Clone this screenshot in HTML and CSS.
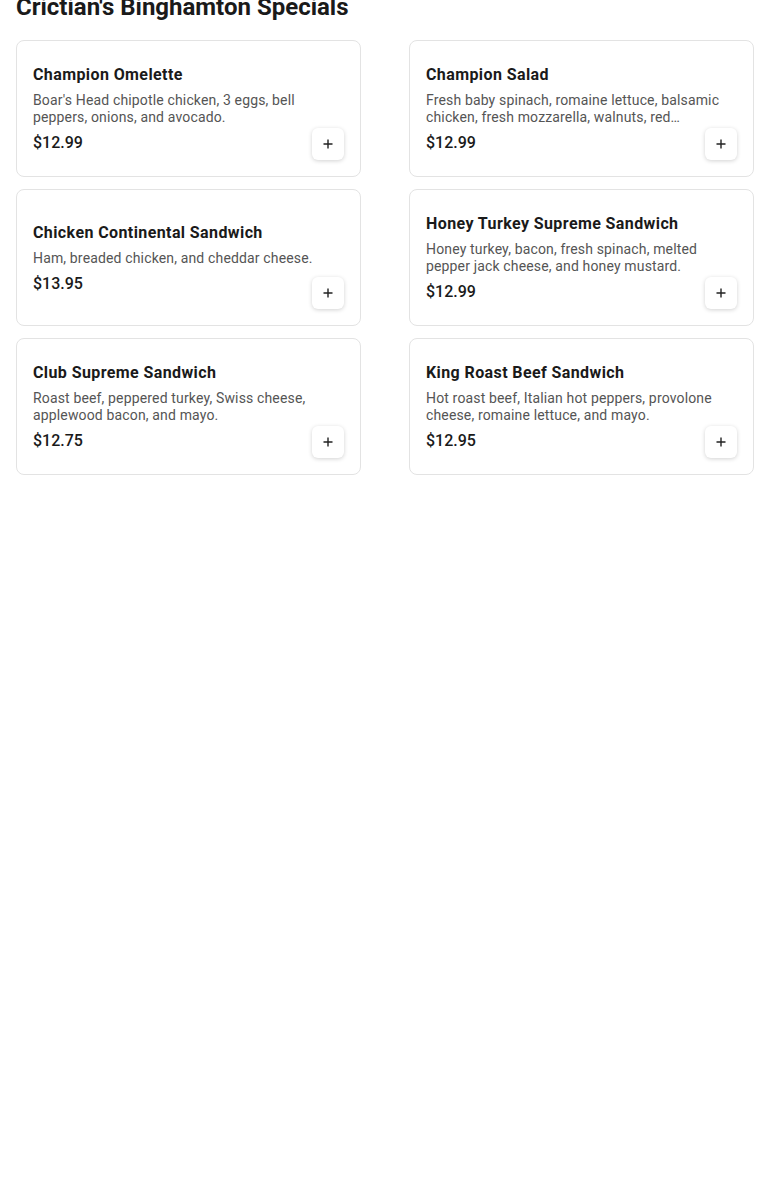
FILE: index.html
```html
<!DOCTYPE html>
<html lang="en">
<head>
  <meta charset="UTF-8">
  <meta name="viewport" content="width=device-width, initial-scale=1.0">
  <title>Crictian's Binghamton Specials</title>
  <link rel="stylesheet" href="styles.css">
</head>
<body>
  <div class="page">
    <h1 class="section-title">Crictian's Binghamton Specials</h1>

    <div class="menu-grid">
      <div class="menu-card">
        <div class="item-info">
          <div class="item-name">Champion Omelette</div>
          <div class="item-desc">Boar's Head chipotle chicken, 3 eggs, bell peppers, onions, and avocado.</div>
          <div class="item-price">$12.99</div>
        </div>
        <div class="add-button"><svg viewBox="0 0 10 10"><path d="M5 0.5v9M0.5 5h9"/></svg></div>
      </div>

      <div class="menu-card">
        <div class="item-info">
          <div class="item-name">Champion Salad</div>
          <div class="item-desc">Fresh baby spinach, romaine lettuce, balsamic chicken, fresh mozzarella, walnuts, red cranberries, and balsamic vinaigrette.</div>
          <div class="item-price">$12.99</div>
        </div>
        <div class="add-button"><svg viewBox="0 0 10 10"><path d="M5 0.5v9M0.5 5h9"/></svg></div>
      </div>

      <div class="menu-card">
        <div class="item-info">
          <div class="item-name">Chicken Continental Sandwich</div>
          <div class="item-desc">Ham, breaded chicken, and cheddar cheese.</div>
          <div class="item-price">$13.95</div>
        </div>
        <div class="add-button"><svg viewBox="0 0 10 10"><path d="M5 0.5v9M0.5 5h9"/></svg></div>
      </div>

      <div class="menu-card">
        <div class="item-info">
          <div class="item-name">Honey Turkey Supreme Sandwich</div>
          <div class="item-desc">Honey turkey, bacon, fresh spinach, melted pepper jack cheese, and honey mustard.</div>
          <div class="item-price">$12.99</div>
        </div>
        <div class="add-button"><svg viewBox="0 0 10 10"><path d="M5 0.5v9M0.5 5h9"/></svg></div>
      </div>

      <div class="menu-card">
        <div class="item-info">
          <div class="item-name">Club Supreme Sandwich</div>
          <div class="item-desc">Roast beef, peppered turkey, Swiss cheese, applewood bacon, and mayo.</div>
          <div class="item-price">$12.75</div>
        </div>
        <div class="add-button"><svg viewBox="0 0 10 10"><path d="M5 0.5v9M0.5 5h9"/></svg></div>
      </div>

      <div class="menu-card">
        <div class="item-info">
          <div class="item-name">King Roast Beef Sandwich</div>
          <div class="item-desc">Hot roast beef, Italian hot peppers, provolone cheese, romaine lettuce, and mayo.</div>
          <div class="item-price">$12.95</div>
        </div>
        <div class="add-button"><svg viewBox="0 0 10 10"><path d="M5 0.5v9M0.5 5h9"/></svg></div>
      </div>
    </div>
  </div>
</body>
</html>
```

FILE: styles.css
```css
/* Basic Reset */
* {
  margin: 0;
  padding: 0;
  box-sizing: border-box;
}

body {
  font-family: Roboto, "Liberation Sans", sans-serif;
  background: #ffffff;
  color: #1f1f1f;
}

.page {
  padding: 0 16px;
}

.section-title {
  margin-top: -7px;
  margin-bottom: 19px;
  font-size: 24px;
  line-height: 28px;
  font-weight: 700;
  color: #1a1a1a;
}

/* Two column grid of cards */
.menu-grid {
  display: grid;
  grid-template-columns: 1fr 1fr;
  column-gap: 48px;
  row-gap: 12px;
}

.menu-card {
  display: grid;
  height: 137px;
  padding: 16px;
  border: 1px solid #e3e3e3;
  border-radius: 8px;
  background: #fff;
}

/* info and button share the same cell */
.item-info,
.add-button {
  grid-area: 1 / 1;
}

.item-info {
  align-self: center;
  min-width: 0;
}

.item-name {
  font-size: 16px;
  line-height: 22px;
  font-weight: 700;
  letter-spacing: 0.4px;
  color: #1a1a1a;
  margin-bottom: 6px;
}

.item-desc {
  font-size: 14px;
  line-height: 17px;
  letter-spacing: 0.15px;
  color: #555555;
  display: -webkit-box;
  -webkit-line-clamp: 2;
  -webkit-box-orient: vertical;
  overflow: hidden;
}

.item-price {
  margin-top: 7px;
  font-size: 16px;
  line-height: 20px;
  font-weight: 500;
  color: #1a1a1a;
}

.add-button {
  justify-self: end;
  align-self: end;
  width: 32px;
  height: 32px;
  border-radius: 6px;
  background: #fff;
  box-shadow: 0 1px 4px rgba(0, 0, 0, 0.18);
  display: flex;
  align-items: center;
  justify-content: center;
}

.add-button svg {
  width: 10px;
  height: 10px;
  stroke: #222;
  stroke-width: 1.4;
  fill: none;
}
```
